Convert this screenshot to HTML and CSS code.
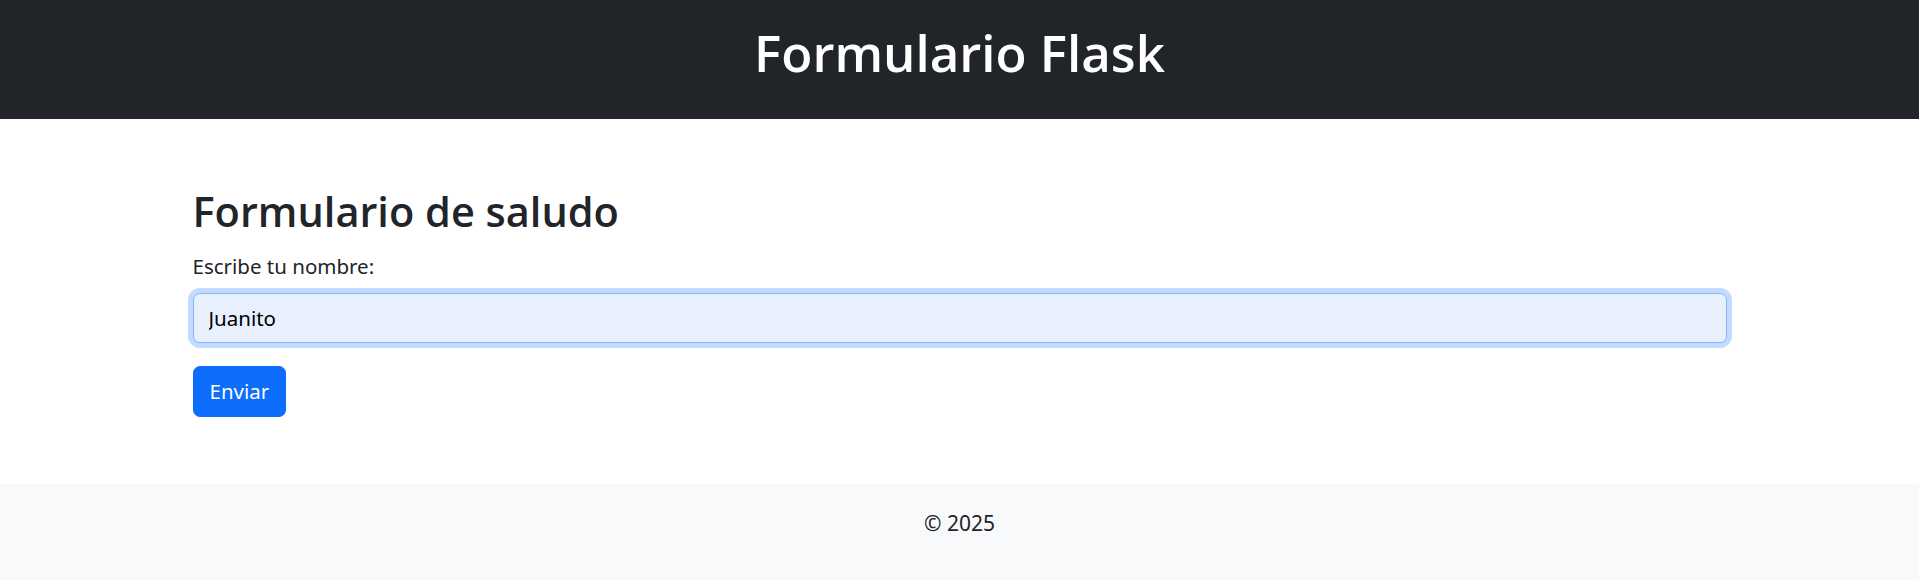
FILE: index.html
```html
<!DOCTYPE html>
<html lang="es">
<head>
<meta charset="utf-8">
<title>Formulario Flask</title>
<link rel="stylesheet" href="styles.css">
</head>
<body>
<header class="site-header">
  <h1 class="site-title">Formulario Flask</h1>
</header>
<main class="content">
  <h2 class="form-title">Formulario de saludo</h2>
  <form class="greet-form">
    <label class="form-label" for="nombre">Escribe tu nombre:</label>
    <input class="form-control" id="nombre" type="text" value="Juanito">
    <button class="btn-primary" type="button">Enviar</button>
  </form>
</main>
<footer class="site-footer">
  <p class="footer-text">© 2025</p>
</footer>
</body>
</html>
```

FILE: styles.css
```css
* { box-sizing: border-box; }
html, body { margin: 0; padding: 0; }
body {
  font-family: "Noto Sans", "Open Sans", sans-serif;
  color: #212529;
  background: #ffffff;
  width: 1919px;
  height: 580px;
  overflow: hidden;
  display: flex;
  flex-direction: column;
}
.site-header {
  background: #212529;
  height: 119px;
  padding-top: 22px;
  text-align: center;
}
.site-title {
  margin: 0;
  color: #ffffff;
  font-family: "Open Sans", "Noto Sans", sans-serif;
  font-size: 51px;
  font-weight: 600;
  line-height: 1.2;
}
.content {
  height: 365px;
  width: 1534px;
  margin: 0 auto;
  padding-top: 68px;
}
.form-title {
  margin: 0 0 14px;
  font-family: "Open Sans", "Noto Sans", sans-serif;
  font-size: 41.5px;
  font-weight: 600;
  line-height: 1.2;
}
.greet-form {
  display: flex;
  flex-direction: column;
  align-items: flex-start;
}
.form-label {
  font-size: 20.5px;
  line-height: 30px;
  margin-bottom: 12px;
}
.form-control {
  width: 100%;
  height: 50px;
  padding: 0 15px;
  font-family: inherit;
  font-size: 20.5px;
  color: #000000;
  background: #e8f0fe;
  border: 1px solid #86b7fe;
  border-radius: 7px;
  box-shadow: 0 0 0 5px rgba(13, 110, 253, 0.25);
  outline: none;
  margin-bottom: 23px;
}
.btn-primary {
  height: 51px;
  padding: 0 16px;
  font-family: inherit;
  font-size: 20.5px;
  color: #ffffff;
  background: #0d6efd;
  border: 1px solid #0d6efd;
  border-radius: 7px;
}
.site-footer {
  flex: 1;
  background: #f8f9fa;
  padding-top: 24px;
  text-align: center;
}
.footer-text {
  margin: 0;
  font-size: 21px;
  line-height: 30px;
}
```
